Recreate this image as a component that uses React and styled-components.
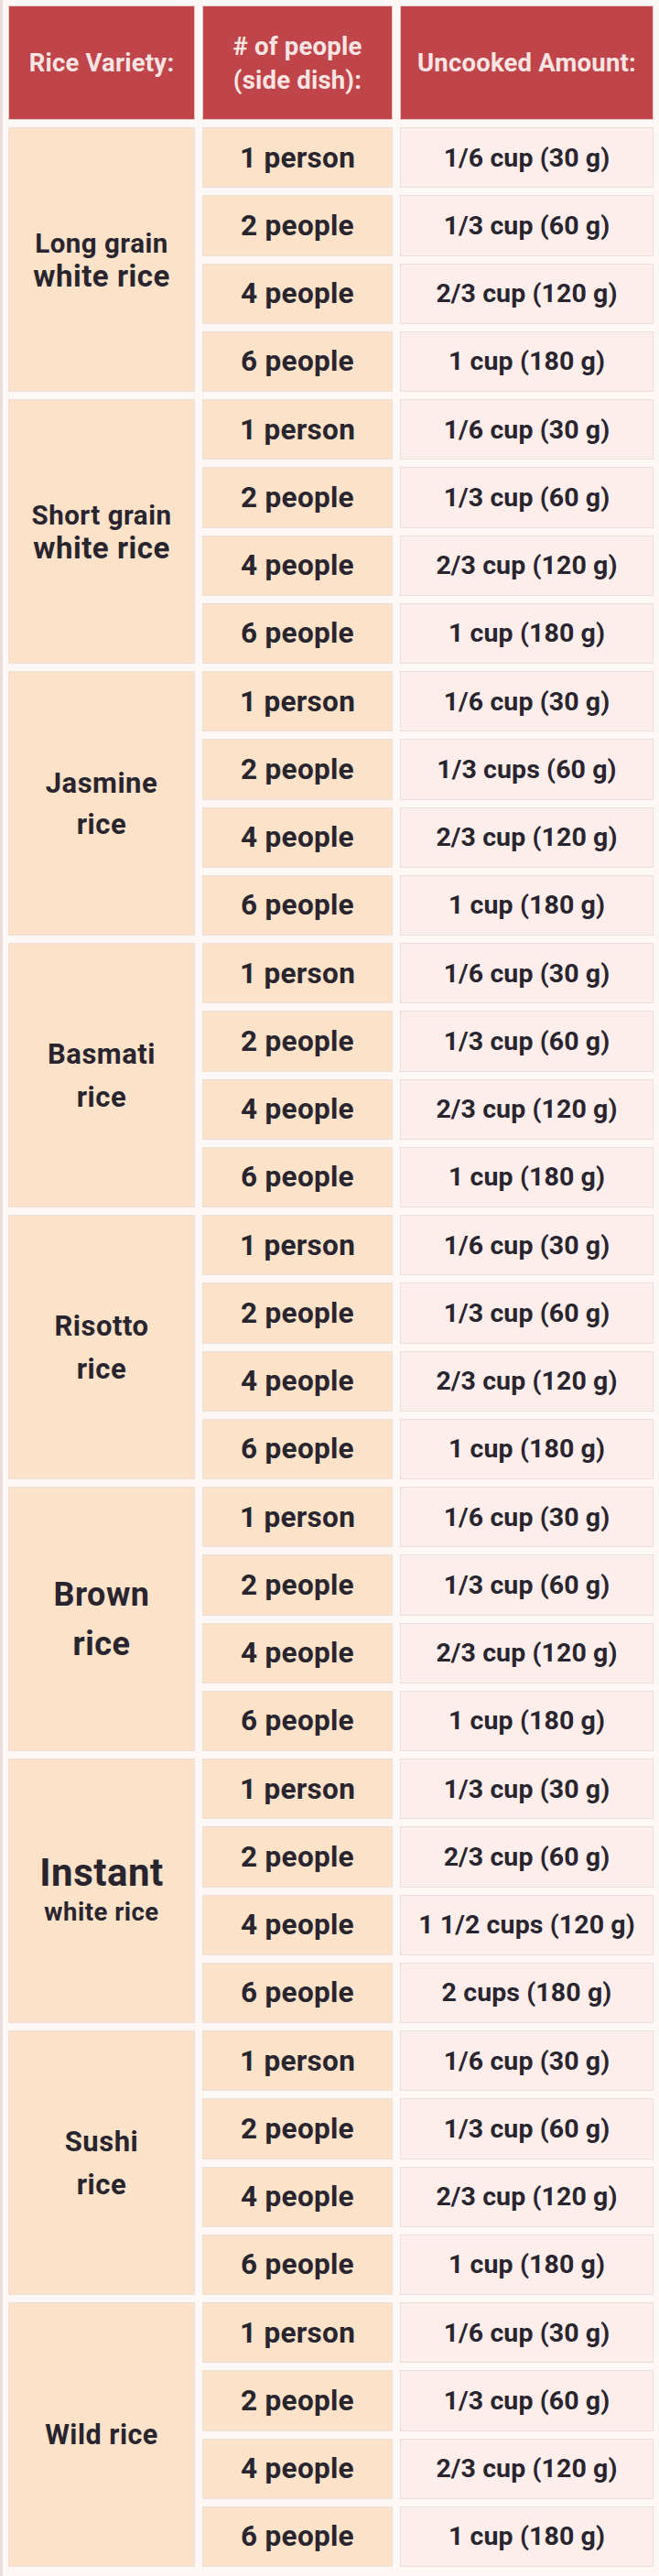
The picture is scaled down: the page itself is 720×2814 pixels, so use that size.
import React from "react";
import styled, { createGlobalStyle } from "styled-components";

const GlobalStyle = createGlobalStyle`
  html, body {
    margin: 0;
    padding: 0;
    background: #fbf3f2;
  }
  body {
    font-family: Roboto, "Liberation Sans", Arial, sans-serif;
    -webkit-font-smoothing: antialiased;
  }
`;

const Page = styled.div`
  width: 720px;
  box-sizing: border-box;
  padding: 7px 7px 11px 7px;
  display: flex;
  flex-direction: column;
  gap: 10px;
  background: #fdf7f6;
  border-left: 3px solid #eadcdc;
`;

const columns = `202px 206px 1fr`;

const HeaderRow = styled.div`
  display: grid;
  grid-template-columns: ${columns};
  column-gap: 10px;
  height: 123px;
`;

const HeaderCell = styled.div`
  background: #c0454a;
  color: #f8e4e2;
  font-weight: 700;
  font-size: 27.5px;
  line-height: 37px;
  letter-spacing: 0.2px;
  display: flex;
  align-items: center;
  justify-content: center;
  text-align: center;
  box-shadow: 0 0 0 1px rgba(160, 60, 60, 0.25);
`;

const Group = styled.div`
  display: grid;
  grid-template-columns: ${columns};
  grid-template-rows: repeat(4, 1fr);
  column-gap: 10px;
  row-gap: 10px;
  height: 287px;
`;

const Cell = styled.div`
  display: flex;
  align-items: center;
  justify-content: center;
  text-align: center;
  color: #29252f;
  font-weight: 700;
  box-shadow: 0 0 0 1px rgba(190, 160, 160, 0.28);
`;

const VarietyCell = styled(Cell)`
  grid-column: 1;
  grid-row: 1 / -1;
  background: #fde2ca;
  flex-direction: column;
`;

const PeopleCell = styled(Cell)`
  grid-column: 2;
  grid-row: ${(p) => p.$row};
  background: #fde2ca;
  font-size: 31.5px;
  letter-spacing: 0.3px;
`;

const AmountCell = styled(Cell)`
  grid-column: 3;
  grid-row: ${(p) => p.$row};
  background: #fdeeec;
  font-size: 28.5px;
  letter-spacing: 0.1px;
`;

const LabelLine = styled.span`
  display: block;
  font-size: ${(p) => p.$size}px;
  line-height: ${(p) => p.$lh}px;
  letter-spacing: 0.5px;
  white-space: nowrap;
`;

const std = ["1/6 cup (30 g)", "1/3 cup (60 g)", "2/3 cup (120 g)", "1 cup (180 g)"];

const groups = [
  {
    label: [
      ["Long grain", 29.5, 36],
      ["white rice", 33, 36],
    ],
    amounts: std,
  },
  {
    label: [
      ["Short grain", 29.5, 36],
      ["white rice", 33, 36],
    ],
    amounts: std,
  },
  {
    label: [
      ["Jasmine", 31, 45],
      ["rice", 31, 45],
    ],
    amounts: ["1/6 cup (30 g)", "1/3 cups (60 g)", "2/3 cup (120 g)", "1 cup (180 g)"],
  },
  {
    label: [
      ["Basmati", 31, 47],
      ["rice", 31, 47],
    ],
    amounts: std,
  },
  {
    label: [
      ["Risotto", 31, 47],
      ["rice", 31, 47],
    ],
    amounts: std,
  },
  {
    label: [
      ["Brown", 36, 54],
      ["rice", 36, 54],
    ],
    amounts: std,
  },
  {
    label: [
      ["Instant", 42, 47],
      ["white rice", 27.5, 40],
    ],
    amounts: ["1/3 cup (30 g)", "2/3 cup (60 g)", "1 1/2 cups (120 g)", "2 cups (180 g)"],
  },
  {
    label: [
      ["Sushi", 31, 47],
      ["rice", 31, 47],
    ],
    amounts: std,
  },
  {
    label: [["Wild rice", 30.5, 40]],
    amounts: std,
  },
];

const people = ["1 person", "2 people", "4 people", "6 people"];

export default function App() {
  return (
    <>
      <GlobalStyle />
      <Page>
        <HeaderRow>
          <HeaderCell>Rice Variety:</HeaderCell>
          <HeaderCell>
            # of people
            <br />
            (side dish):
          </HeaderCell>
          <HeaderCell>Uncooked Amount:</HeaderCell>
        </HeaderRow>
        {groups.map((g, gi) => (
          <Group key={gi}>
            <VarietyCell>
              {g.label.map(([text, size, lh], li) => (
                <LabelLine key={li} $size={size} $lh={lh}>
                  {text}
                </LabelLine>
              ))}
            </VarietyCell>
            {people.map((p, i) => (
              <React.Fragment key={i}>
                <PeopleCell $row={i + 1}>{p}</PeopleCell>
                <AmountCell $row={i + 1}>{g.amounts[i]}</AmountCell>
              </React.Fragment>
            ))}
          </Group>
        ))}
      </Page>
    </>
  );
}
